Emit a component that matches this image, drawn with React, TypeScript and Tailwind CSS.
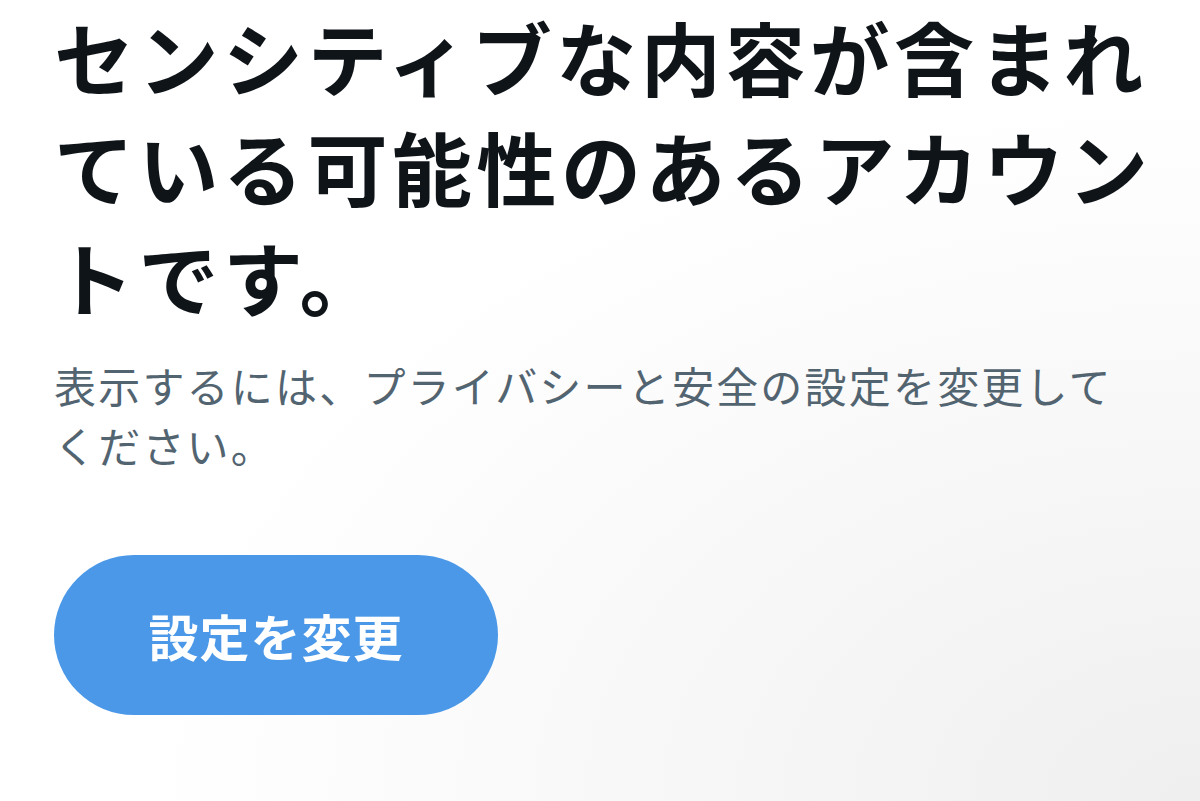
export default function App() {
  return (
    <div
      className="w-[1200px] h-[801px] overflow-hidden bg-white bg-[radial-gradient(ellipse_at_100%_100%,#efefef_0%,#f7f7f7_30%,#ffffff_62%)]"
      style={{ fontFamily: '"Noto Sans CJK JP", "Noto Sans", sans-serif' }}
    >
      <div className="flex flex-col pl-[54px] pr-[20px]">
        <h1 className="text-[80px] leading-[110px] font-bold tracking-[4.5px] text-[#0f1419]">
          センシティブな内容が含まれている可能性のあるアカウントです。
        </h1>
        <p className="mt-[25px] pr-[40px] text-[42px] leading-[60px] tracking-[2.2px] text-[#536471]">
          表示するには、プライバシーと安全の設定を変更してください。
        </p>
        <div className="mt-[80px]">
          <button className="w-[444px] h-[160px] rounded-full bg-[#4a98e7] text-white text-[50px] font-bold tracking-[1px]">
            設定を変更
          </button>
        </div>
      </div>
    </div>
  );
}
